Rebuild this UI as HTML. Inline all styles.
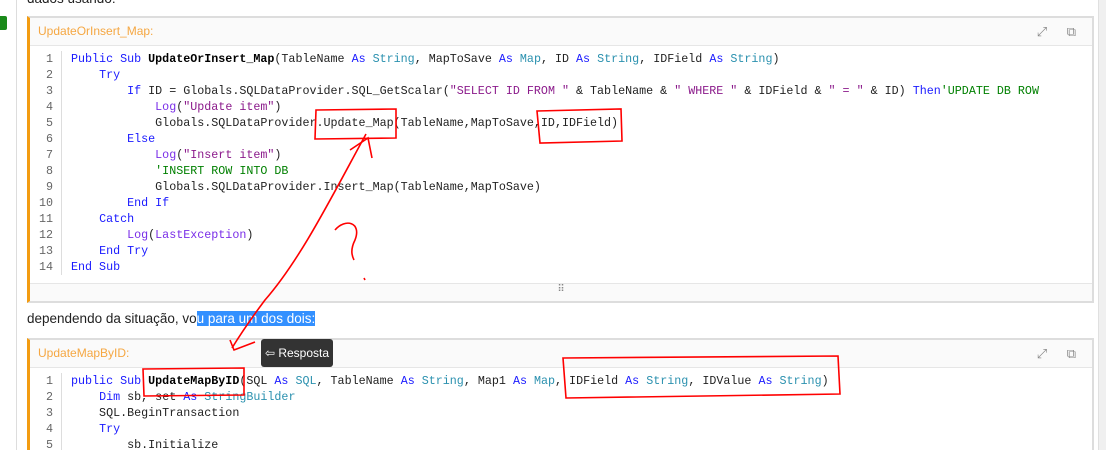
<!DOCTYPE html><html><head><style>
html,body{margin:0;width:1106px;height:450px;overflow:hidden}
body{background:#fff;font-family:"Liberation Sans",sans-serif;position:relative}
.vl{position:absolute;left:16px;top:0;width:1px;height:450px;background:#ddd}
.gr{position:absolute;left:0;top:16px;width:7px;height:14px;background:#1a8a1a;border-radius:0 2px 2px 0}
.sb{position:absolute;left:1098px;top:0;width:8px;height:450px;background:#f0f0f0;border-left:1px solid #e0e0e0}
.box{position:absolute;left:27px;width:1062px;border:2px solid #ddd;border-left:3px solid #f39c12;background:#fff;overflow:hidden}
.hd{height:27px;background:#fafafa;border-bottom:1px solid #e6e6e6;color:#f5a742;font-size:12px;line-height:27px;padding-left:8px;position:relative}
.ic{position:absolute;right:8px;top:0;color:#888;font-size:13px;letter-spacing:8px}
.code{position:relative;font-family:"Liberation Mono",monospace;font-size:11.7px;line-height:16px;padding-top:5px;white-space:pre;color:#222}
.ln{position:absolute;left:0;top:5px;width:31px;border-right:1px solid #ddd;text-align:right;color:#666}
.ln div{padding-right:8px}
.tx{margin-left:41px}
.k{color:#1a1aff}.t{color:#2b91af}.c{color:#008000}.s{color:#8b1a8b}.f{color:#7a2ee8}b{color:#000}
.ft{height:17px;border-top:1px solid #e6e6e6;background:#fafafa;margin-top:8px;text-align:center;color:#888;font-size:10px}
p{position:absolute;left:27px;top:311px;margin:0;font-size:13.5px;color:#222}
.sel{background:#3390ff;color:#fff}
.tip{position:absolute;left:261px;top:339px;width:72px;height:28px;background:#333;color:#fff;font-size:12px;line-height:28px;text-align:center;border-radius:3px}
</style></head><body>
<div class="vl"></div><div class="gr"></div><div class="sb"></div>
<div style="position:absolute;left:27px;top:-9px;font-size:13.5px;color:#222">dados usando:</div>
<div class="box" style="top:16px;height:283px">
<div class="hd">UpdateOrInsert_Map:<span class="ic">⤢ ⧉</span></div>
<div class="code"><div class="ln"><div>1</div><div>2</div><div>3</div><div>4</div><div>5</div><div>6</div><div>7</div><div>8</div><div>9</div><div>10</div><div>11</div><div>12</div><div>13</div><div>14</div></div><div class="tx"><span class="k">Public Sub</span> <b>UpdateOrInsert_Map</b>(TableName <span class="k">As</span> <span class="t">String</span>, MapToSave <span class="k">As</span> <span class="t">Map</span>, ID <span class="k">As</span> <span class="t">String</span>, IDField <span class="k">As</span> <span class="t">String</span>)
    <span class="k">Try</span>
        <span class="k">If</span> ID = Globals.SQLDataProvider.SQL_GetScalar(<span class="s">"SELECT ID FROM "</span> &amp; TableName &amp; <span class="s">" WHERE "</span> &amp; IDField &amp; <span class="s">" = "</span> &amp; ID) <span class="k">Then</span><span class="c">'UPDATE DB ROW</span>
            <span class="f">Log</span>(<span class="s">"Update item"</span>)
            Globals.SQLDataProvider.Update_Map(TableName,MapToSave,ID,IDField)
        <span class="k">Else</span>
            <span class="f">Log</span>(<span class="s">"Insert item"</span>)
            <span class="c">'INSERT ROW INTO DB</span>
            Globals.SQLDataProvider.Insert_Map(TableName,MapToSave)
        <span class="k">End If</span>
    <span class="k">Catch</span>
        <span class="f">Log</span>(<span class="f">LastException</span>)
    <span class="k">End Try</span>
<span class="k">End Sub</span></div></div>
<div class="ft">⠿</div>
</div>
<p>dependendo da situação, vo<span class="sel">u para um dos dois:</span></p>
<div class="box" style="top:338px;height:112px;border-bottom:none">
<div class="hd">UpdateMapByID:<span class="ic">⤢ ⧉</span></div>
<div class="code"><div class="ln"><div>1</div><div>2</div><div>3</div><div>4</div><div>5</div></div><div class="tx"><span class="k">public Sub</span> <b>UpdateMapByID</b>(SQL <span class="k">As</span> <span class="t">SQL</span>, TableName <span class="k">As</span> <span class="t">String</span>, Map1 <span class="k">As</span> <span class="t">Map</span>, IDField <span class="k">As</span> <span class="t">String</span>, IDValue <span class="k">As</span> <span class="t">String</span>)
    <span class="k">Dim</span> sb, set <span class="k">As</span> <span class="t">StringBuilder</span>
    SQL.BeginTransaction
    <span class="k">Try</span>
        sb.Initialize</div></div>
</div>
<div class="tip">⇦ Resposta</div>
<svg style="position:absolute;left:0;top:0" width="1106" height="450" fill="none" stroke="#f00" stroke-width="1.6">
<path d="M316 110 L396 109 L396 138 L315 139 Z"/>
<path d="M537 111 L621 109 L622 141 L540 143 Z"/>
<path d="M143 369 L244 368 L244 395 L144 396 Z"/>
<path d="M563 358 L838 356 L840 394 L566 398 Z"/>
<path d="M366 134 C330 200 300 260 265 300 C250 320 240 335 232 348 M230 340 L234 350 L255 342"/>
<path d="M350 150 L368 138 L372 158"/>
<path d="M335 230 C345 218 362 222 355 240 C350 250 352 256 354 260"/>
<path d="M364 278 L365 280"/>
</svg>
</body></html>
